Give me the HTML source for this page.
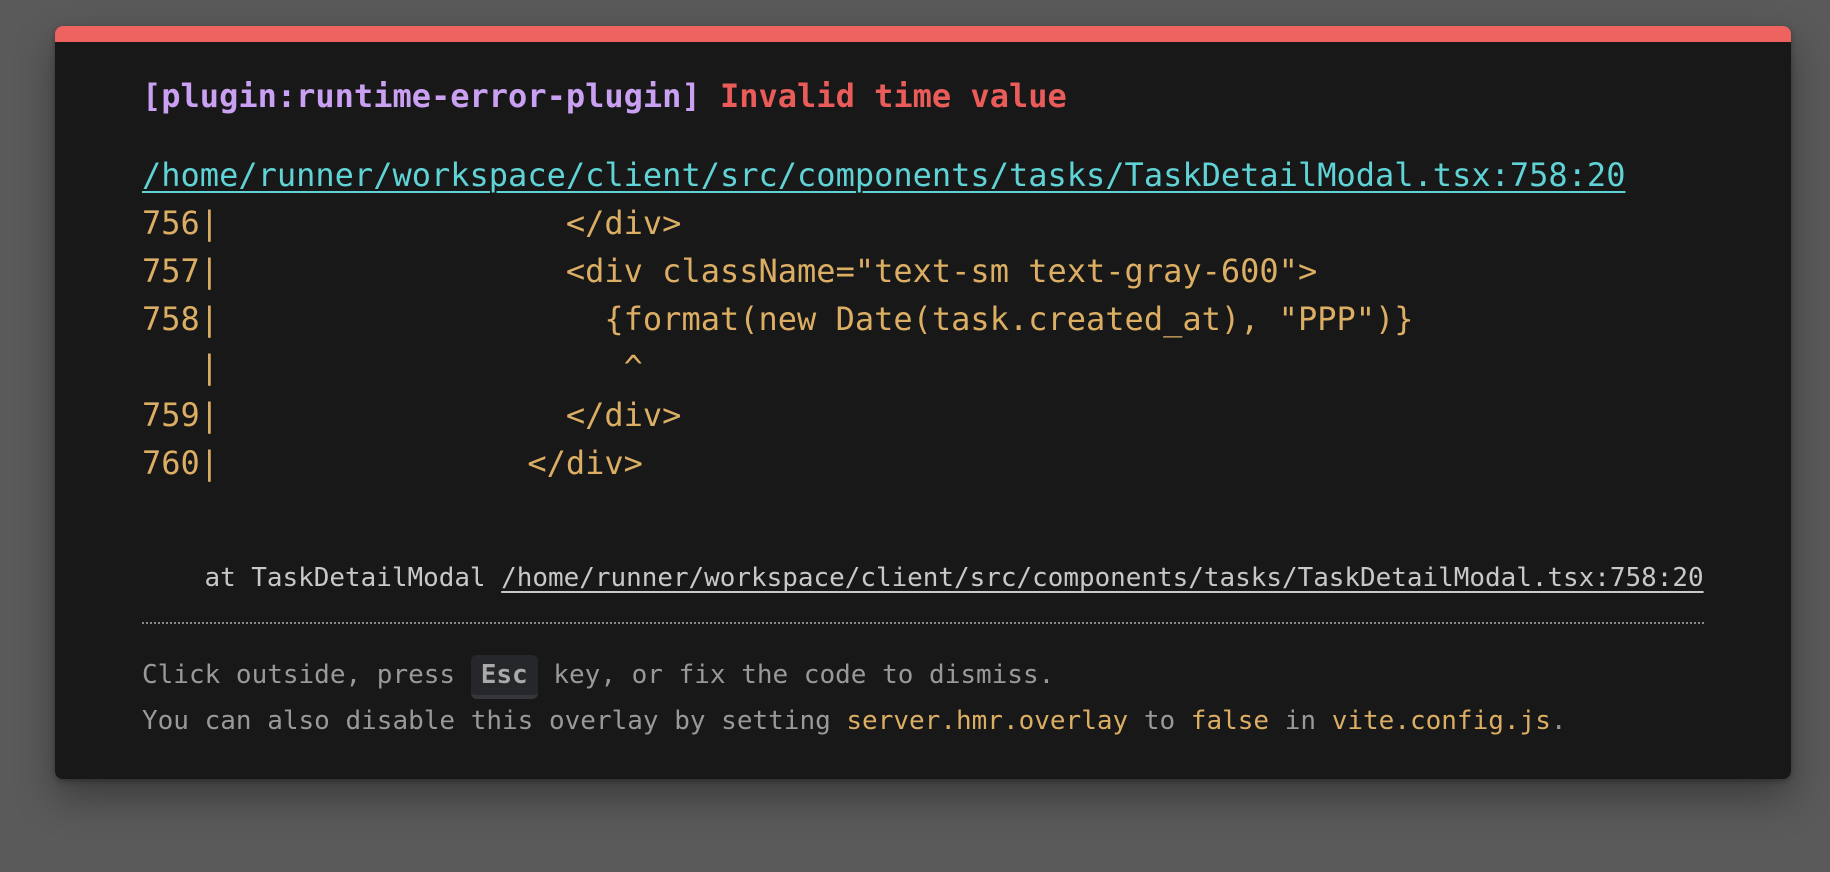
<!DOCTYPE html>
<html><head><meta charset="utf-8"><style>
html,body{margin:0;padding:0;width:1830px;height:872px;background:#5a5a5a;overflow:hidden}
.p{position:absolute;left:55px;top:26px;width:1736px;height:753px;background:#181818;border-radius:8px;border-top:16px solid #ee6360;box-sizing:border-box;box-shadow:0 18px 40px rgba(0,0,0,.35),0 2px 6px rgba(0,0,0,.3)}
.t{position:absolute;left:142px;font-family:"DejaVu Sans Mono","Liberation Mono",monospace;white-space:pre;margin:0}
.big{font-size:32px;line-height:48px}
.sm{font-size:26px;line-height:46px}
.pu{color:#c9a0f2}.rd{color:#ea5c5a}.cy{color:#5fd3d6;text-decoration:underline;text-underline-offset:5px;text-decoration-thickness:2px}
.ye{color:#dcae64}.gr{color:#c8c8c8}.dm{color:#999}
.kbd{display:inline-block;background:#26272b;border-radius:6px;border-bottom:4px solid #36373c;color:#aaa;font-weight:bold;padding:0 10px;line-height:40px;box-sizing:border-box}
</style></head><body>
<div class="p"></div>
<div class="t big" style="top:72px;font-weight:bold"><span class="pu">[plugin:runtime-error-plugin]</span> <span class="rd">Invalid time value</span></div>
<div class="t big" style="top:151px"><span class="cy">/home/runner/workspace/client/src/components/tasks/TaskDetailModal.tsx:758:20</span>
<span class="ye">756|                  &lt;/div&gt;
757|                  &lt;div className="text-sm text-gray-600"&gt;
758|                    {format(new Date(task.created_at), "PPP")}
   |                     ^
759|                  &lt;/div&gt;
760|                &lt;/div&gt;</span></div>
<div class="t sm gr" style="top:555px;font-size:25.95px">    at TaskDetailModal <span style="text-decoration:underline;text-underline-offset:5px;text-decoration-thickness:2px">/home/runner/workspace/client/src/components/tasks/TaskDetailModal.tsx:758:20</span></div>
<div style="position:absolute;left:142px;top:622px;width:1562px;border-top:2px dotted #8a8a8a"></div>
<div class="t sm dm" style="top:652px">Click outside, press <span class="kbd">Esc</span> key, or fix the code to dismiss.</div>
<div class="t sm dm" style="top:698px">You can also disable this overlay by setting <span class="ye">server.hmr.overlay</span> to <span class="ye">false</span> in <span class="ye">vite.config.js</span>.</div>
</body></html>
